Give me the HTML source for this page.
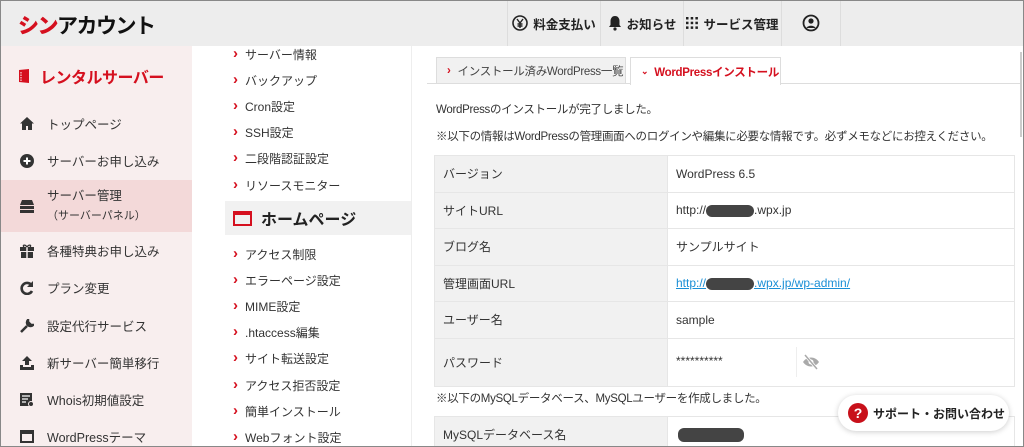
<!DOCTYPE html><html><head><meta charset="utf-8"><style>
*{margin:0;padding:0;box-sizing:border-box}
html,body{width:1024px;height:447px;overflow:hidden}
body{background:#fff;font-family:"Liberation Sans","Noto Sans CJK JP",sans-serif;color:#333;position:relative}
.frame{position:absolute;left:0;top:0;width:1024px;height:447px;border:1px solid #888;pointer-events:none;z-index:9}
.hdr{position:absolute;left:0;top:0;width:1024px;height:46px;background:#ededed}
.logo{position:absolute;left:18px;top:10px;font-size:21px;font-weight:bold;letter-spacing:-1.5px;color:#111}
.logo b{color:#d5101f}
.hn{position:absolute;top:0;height:46px;border-left:1px solid #ddd;display:flex;align-items:center;justify-content:center;font-size:12.5px;font-weight:bold;color:#222;gap:5px;white-space:nowrap}
.side{position:absolute;left:0;top:46px;width:192px;height:401px;background:#f8eeee}
.side .t{position:absolute;left:18px;top:18px;font-size:16px;font-weight:bold;color:#d5101f;display:flex;gap:10px;align-items:center;letter-spacing:-0.5px}
.si{position:absolute;left:0;width:192px;height:37px;display:flex;align-items:center;font-size:12.5px;color:#333;white-space:nowrap}
.si svg{margin:0 13px 0 20px;flex:none}
.sub{position:absolute;left:225px;top:46px;width:186px;height:401px;background:#fff}
.sub div.l{height:26.2px;font-size:12px;display:flex;align-items:center;padding-left:8px;color:#333;white-space:nowrap}
.sub div.l:before{content:"›";color:#d5101f;font-weight:bold;font-size:15px;margin-right:7px;margin-top:-2px}
.hp{height:34px;background:#f1f1f1;display:flex;align-items:center;padding-left:8px;font-size:16px;font-weight:bold;color:#222}
.vl{position:absolute;left:411px;top:46px;width:1px;height:401px;background:#eee}
.tab{position:absolute;top:57px;height:27px;border:1px solid #ddd;font-size:11.5px;display:flex;align-items:center;padding-left:10px;white-space:nowrap;letter-spacing:-0.3px}
p.m{position:absolute;left:436px;font-size:11.5px;color:#333;white-space:nowrap;letter-spacing:-0.3px}
table{position:absolute;left:434px;top:155px;width:581px;border-collapse:collapse;font-size:12px}
td{border:1px solid #e6e6e6;height:36.5px;padding-left:8px;white-space:nowrap}
td.k{background:#f1f1f1;width:233px}
.blk{display:inline-block;width:48px;height:12px;background:#444;border-radius:6px;vertical-align:middle}
</style></head><body>
<div class="hdr"><div class="logo"><b>シン</b>アカウント</div>
<div class="hn" style="left:507px;width:93px"><svg width="16" height="16" viewBox="0 0 16 16"><circle cx="8" cy="8" r="7" fill="none" stroke="#222" stroke-width="1.6"/><path d="M5 4l3 4 3-4M8 8v5M5.5 9h5M5.5 11h5" stroke="#222" stroke-width="1.4" fill="none"/></svg>料金支払い</div>
<div class="hn" style="left:600px;width:83px"><svg width="14" height="16" viewBox="0 0 14 16"><path d="M7 1c3 0 4.5 2.5 4.5 5v4l1.5 2H1l1.5-2V6C2.5 3.5 4 1 7 1z" fill="#222"/><circle cx="7" cy="14" r="1.6" fill="#222"/></svg>お知らせ</div>
<div class="hn" style="left:683px;width:98px"><svg width="12" height="12" viewBox="0 0 12 12" fill="#222"><rect x="0" y="0" width="2.5" height="2.5"/><rect x="4.7" y="0" width="2.5" height="2.5"/><rect x="9.4" y="0" width="2.5" height="2.5"/><rect x="0" y="4.7" width="2.5" height="2.5"/><rect x="4.7" y="4.7" width="2.5" height="2.5"/><rect x="9.4" y="4.7" width="2.5" height="2.5"/><rect x="0" y="9.4" width="2.5" height="2.5"/><rect x="4.7" y="9.4" width="2.5" height="2.5"/><rect x="9.4" y="9.4" width="2.5" height="2.5"/></svg>サービス管理</div>
<div class="hn" style="left:781px;width:60px;border-right:1px solid #ddd"><svg width="18" height="18" viewBox="0 0 18 18"><circle cx="9" cy="9" r="7.5" fill="none" stroke="#222" stroke-width="1.8"/><circle cx="9" cy="7" r="2.6" fill="#222"/><path d="M4.5 14c1-3 8-3 9 0" fill="#222"/></svg></div></div>
<div class="side"><div class="t"><svg width="12" height="16" viewBox="0 0 12 16"><path d="M1 2l10-1v14L1 14z" fill="#d5101f"/><path d="M3 4v9" stroke="#fff" stroke-width="1" stroke-dasharray="1.5 1"/></svg>レンタルサーバー</div>
<div class="si" style="top:59px"><svg width="14" height="13" viewBox="0 0 14 13"><path d="M7 0L0 6.5h2V13h4V9h2v4h4V6.5h2z" fill="#333"/></svg>トップページ</div>
<div class="si" style="top:96px"><svg width="14" height="14" viewBox="0 0 14 14"><circle cx="7" cy="7" r="7" fill="#333"/><path d="M7 3.5v7M3.5 7h7" stroke="#fff" stroke-width="2"/></svg>サーバーお申し込み</div>
<div class="si" style="top:134px;height:52px;background:#f3d9d9;line-height:1.5"><svg width="14" height="13" viewBox="0 0 14 13"><path d="M2 0h10l2 5H0z" fill="#333"/><rect y="6" width="14" height="3" fill="#333"/><rect y="10" width="14" height="3" fill="#333"/></svg><span>サーバー管理<br><span style="font-size:11px">（サーバーパネル）</span></span></div>
<div class="si" style="top:186px"><svg width="14" height="14" viewBox="0 0 14 14"><rect y="3" width="14" height="4" fill="#333"/><rect x="1" y="8" width="12" height="6" fill="#333"/><path d="M7 3v11" stroke="#f8eeee" stroke-width="1.5"/><path d="M7 3C5 0 2 1 4 3M7 3c2-3 5-2 3 0" stroke="#333" fill="none" stroke-width="1.3"/></svg>各種特典お申し込み</div>
<div class="si" style="top:223px"><svg width="14" height="14" viewBox="0 0 14 14"><path d="M11.5 4A5.5 5.5 0 1 0 12 10" stroke="#333" stroke-width="2.6" fill="none"/><path d="M13 0v6H7z" fill="#333"/></svg>プラン変更</div>
<div class="si" style="top:261px"><svg width="14" height="14" viewBox="0 0 14 14"><path d="M1 13l6-6M8 1a3.5 3.5 0 1 0 5 5L11 6 8 3z" stroke="#333" stroke-width="2.5" fill="#333"/></svg>設定代行サービス</div>
<div class="si" style="top:298px"><svg width="14" height="14" viewBox="0 0 14 14"><path d="M7 0L2 5h3v4h4V5h3z" fill="#333"/><path d="M0 9h3v2h8V9h3v5H0z" fill="#333"/></svg>新サーバー簡単移行</div>
<div class="si" style="top:335px"><svg width="14" height="14" viewBox="0 0 14 14"><rect width="12" height="13" fill="#333"/><path d="M2 3h8M2 6h6M2 9h4" stroke="#fff" stroke-width="1.3"/><circle cx="11" cy="11" r="2.5" fill="#333" stroke="#f8eeee"/></svg>Whois初期値設定</div>
<div class="si" style="top:372px"><svg width="14" height="13" viewBox="0 0 14 13"><rect x="1" y="1" width="12" height="11" fill="none" stroke="#333" stroke-width="2"/><rect x="1" y="1" width="12" height="3" fill="#333"/></svg>WordPressテーマ</div></div>
<div class="sub"><div style="margin-top:-5px">
<div class="l">サーバー情報</div><div class="l">バックアップ</div><div class="l">Cron設定</div><div class="l">SSH設定</div><div class="l">二段階認証設定</div><div class="l">リソースモニター</div></div>
<div class="hp" style="margin-top:3px"><span style="width:19px;height:15px;border:2px solid #d5101f;border-top-width:4px;display:inline-block;margin-right:9px"></span>ホームページ</div>
<div style="margin-top:6px"><div class="l">アクセス制限</div><div class="l">エラーページ設定</div><div class="l">MIME設定</div><div class="l">.htaccess編集</div><div class="l">サイト転送設定</div><div class="l">アクセス拒否設定</div><div class="l">簡単インストール</div><div class="l">Webフォント設定</div></div></div>
<div class="vl"></div>
<div style="position:absolute;left:427px;top:83px;width:593px;height:1px;background:#ddd"></div>
<div style="position:absolute;left:1020px;top:52px;width:2px;height:85px;background:#ccc"></div>
<div class="tab" style="left:436px;width:190px;background:#f1f1f1;color:#444"><b style="color:#d5101f;margin-right:7px">›</b>インストール済みWordPress一覧</div>
<div class="tab" style="left:630px;width:151px;height:28px;background:#fff;border-bottom:none;color:#d5101f;font-weight:bold"><span style="font-size:9px;margin-right:6px">⌄</span>WordPressインストール</div>
<p class="m" style="top:101px">WordPressのインストールが完了しました。</p>
<p class="m" style="top:128px">※以下の情報はWordPressの管理画面へのログインや編集に必要な情報です。必ずメモなどにお控えください。</p>
<table>
<tr><td class="k" style="height:35px">バージョン</td><td>WordPress 6.5</td></tr>
<tr><td class="k">サイトURL</td><td>http://<span class="blk"></span>.wpx.jp</td></tr>
<tr><td class="k">ブログ名</td><td>サンプルサイト</td></tr>
<tr><td class="k">管理画面URL</td><td style="color:#1a8fd6;text-decoration:underline">http://<span class="blk"></span>.wpx.jp/wp-admin/</td></tr>
<tr><td class="k">ユーザー名</td><td>sample</td></tr>
<tr><td class="k" style="height:48px">パスワード</td><td><span style="display:inline-block;width:120px">**********</span><span style="display:inline-block;border-left:1px solid #eee;height:30px;vertical-align:middle;padding-left:5px;padding-top:7px"><svg width="18" height="16" viewBox="0 0 18 16"><path d="M1 8c4-6 12-6 16 0-4 6-12 6-16 0z" fill="#aaa"/><circle cx="9" cy="8" r="2.5" fill="#fff"/><path d="M3 1l12 14" stroke="#fff" stroke-width="3"/><path d="M3 1l12 14" stroke="#aaa" stroke-width="1.5"/></svg></span></td></tr>
</table>
<p class="m" style="top:390px">※以下のMySQLデータベース、MySQLユーザーを作成しました。</p>
<table style="top:416px"><tr><td class="k">MySQLデータベース名</td><td><span class="blk" style="width:66px;height:14px;margin-left:2px"></span></td></tr></table>
<div style="position:absolute;left:838px;top:395px;width:171px;height:36px;background:#fff;border-radius:18px;box-shadow:0 1px 6px rgba(0,0,0,.2);display:flex;align-items:center;padding-left:10px;font-size:12px;font-weight:bold;color:#222;white-space:nowrap"><span style="width:20px;height:20px;border-radius:50%;background:#c8101a;color:#fff;display:inline-flex;align-items:center;justify-content:center;font-size:14px;margin-right:5px">?</span>サポート・お問い合わせ</div>
<div class="frame"></div>
</body></html>
